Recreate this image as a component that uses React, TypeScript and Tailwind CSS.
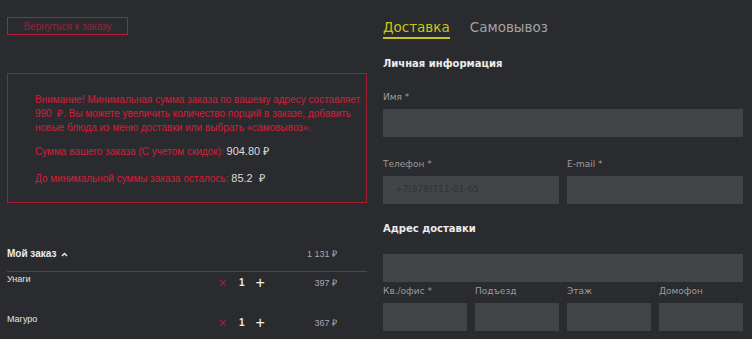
const Field = ({ label, placeholder }: { label?: string; placeholder?: string }) => (
  <div className="flex flex-col">
    {label && (
      <span className="text-[9px] leading-[12px] text-[#9c9c9c]">{label}</span>
    )}
    <div
      className={`${label ? "mt-[6px]" : ""} h-[28px] bg-[#424548] flex items-center pl-[12px] text-[9px] text-[#303236]`}
    >
      {placeholder}
    </div>
  </div>
);

const OrderRow = ({ name, price }: { name: string; price: string }) => (
  <div className="flex h-[40px] items-start">
    <span className="w-[211px] text-[9px] leading-[14px] text-[#e6e6e6]">{name}</span>
    <div className="mt-[4px] flex h-[14px] w-[60px] items-center">
      <span className="text-[11px] leading-none text-[#a3202f]">✕</span>
      <span className="ml-[12px] text-[10px] font-bold leading-none text-[#e8e8e8]">1</span>
      <span className="ml-[11px] text-[16px] font-light leading-none text-[#f0f0f0]">+</span>
    </div>
    <span className="mt-[4px] flex-1 pr-[30px] text-right text-[9px] leading-[14px] text-[#a9a9a9]">
      {price}
    </span>
  </div>
);

export default function App() {
  return (
    <div className="h-[339px] w-[752px] overflow-hidden bg-[#2a2b2e]">
      <div className="flex gap-[16px] pl-[7px]">
        {/* Left column */}
        <div className="flex w-[360px] flex-col font-['Liberation_Sans',sans-serif]">
          <div className="mt-[17px] flex h-[18px] w-[121px] items-center justify-center border border-[#b51e37] text-[10px] text-[#9b2236]">
            Вернуться к заказу
          </div>

          <div className="mt-[38px] h-[130px] border border-[#a51d31] pl-[27px] pt-[19px] text-[10px] leading-[14px] text-[#d21f3b]">
            <p>
              Внимание! Минимальная сумма заказа по вашему адресу составляет
              <br />
              990&nbsp;&nbsp;₽. Вы можете увеличить количество порций в заказе, добавить
              <br />
              новые блюда из меню доставки или выбрать «самовывоз».
            </p>
            <p className="mt-[9px]">
              Сумма вашего заказа (С учетом скидок):{" "}
              <span className="text-[11px] text-[#dcdcdc]">904.80 ₽</span>
            </p>
            <p className="mt-[12px]">
              До минимальной суммы заказа осталось:{" "}
              <span className="text-[11px] text-[#dcdcdc]">85.2&nbsp;&nbsp;₽</span>
            </p>
          </div>

          <div className="mt-[44px] flex items-center border-b border-[#46484c] pb-[10px]">
            <span className="text-[10px] font-bold leading-[14px] text-[#ececec]">Мой заказ</span>
            <svg className="ml-[5px] mt-[1px]" width="7" height="5" viewBox="0 0 7 5">
              <path d="M1 4 L3.5 1.5 L6 4" stroke="#ececec" strokeWidth="1.4" fill="none" />
            </svg>
            <span className="flex-1 pr-[30px] text-right text-[9px] leading-[14px] text-[#a9a9a9]">
              1 131 ₽
            </span>
          </div>

          <OrderRow name="Унаги" price="397 ₽" />
          <OrderRow name="Магуро" price="367 ₽" />
        </div>

        {/* Right column */}
        <div className="flex w-[360px] flex-col font-['DejaVu_Sans',sans-serif]">
          <div className="mt-[17px] flex gap-[20px] text-[13.5px] leading-[20px]">
            <span className="border-b-2 border-[#c9c41b] text-[#c9c41b]">Доставка</span>
            <span className="text-[#a3a3a3]">Самовывоз</span>
          </div>

          <h3 className="mt-[18px] text-[10px] font-bold leading-[14px] text-[#ececec]">
            Личная информация
          </h3>

          <div className="mt-[20px]">
            <Field label="Имя *" />
          </div>

          <div className="mt-[21px] grid grid-cols-2 gap-[8px]">
            <Field label="Телефон *" placeholder="+7(978)711-01-65" />
            <Field label="E-mail *" />
          </div>

          <h3 className="mt-[18px] text-[10px] font-bold leading-[14px] text-[#ececec]">
            Адрес доставки
          </h3>

          <div className="mt-[18px]">
            <Field />
          </div>

          <div className="mt-[3px] grid grid-cols-4 gap-[8px]">
            <Field label="Кв./офис *" />
            <Field label="Подъезд" />
            <Field label="Этаж" />
            <Field label="Домофон" />
          </div>
        </div>
      </div>
    </div>
  );
}
